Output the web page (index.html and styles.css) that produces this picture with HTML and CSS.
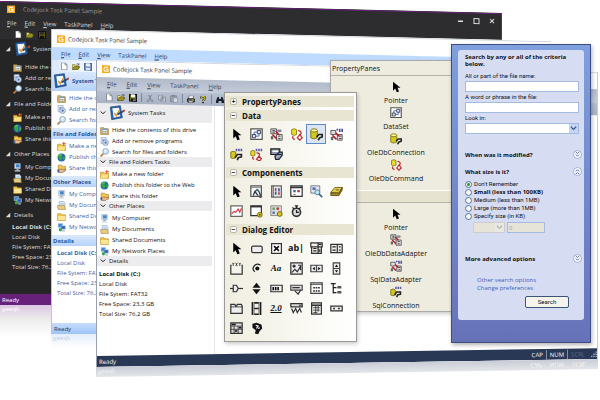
FILE: index.html
```html
<!DOCTYPE html>
<html lang="en">
<head>
  <meta charset="UTF-8">
  <meta name="viewport" content="width=device-width, initial-scale=1">
  <title>Codejock Task Panel Sample</title>
  <link rel="stylesheet" href="styles.css">
</head>
<body>

<!-- icon sprite -->
<svg class="sprite" aria-hidden="true">
  <symbol id="logo" viewBox="0 0 16 16"><path fill="#fba919" d="M0 0h16v16H0z"/><path d="M12 4H6L4 6v4l2 2h6V8H8" fill="none" stroke="#fff" stroke-width="2"/></symbol>
  <symbol id="new" viewBox="0 0 16 16"><path d="M3 1h7l4 4v10H3z" fill="#fff" stroke="#444"/><path d="M10 1v4h4" fill="none" stroke="#444"/></symbol>
  <symbol id="open" viewBox="0 0 16 16"><path d="M1 14V4h5l1 2h6v3" fill="#f3e37c" stroke="#5c5a10"/><path d="M1 14l3-6h12l-4 6z" fill="#9a9620" stroke="#3c3a08"/><path d="M9 3q3-3 5 1m0-3v3h-3" fill="none" stroke="#333"/></symbol>
  <symbol id="save" viewBox="0 0 16 16"><path d="M1 1h14v14H1z" fill="#6d6b12" stroke="#111" stroke-width="2"/><path d="M4 1h8v6H4z" fill="#fff"/><path d="M4 10h8v5H4z" fill="#111"/><path d="M9 11h2v3H9z" fill="#fff"/></symbol>
  <symbol id="save-dark" viewBox="0 0 16 16"><path d="M1 1h14v14H1z" fill="#55530f" stroke="#111" stroke-width="2"/><path d="M4 2h8v5H4z" fill="#2d2d30"/><path d="M4 10h8v5H4z" fill="#111"/></symbol>
  <symbol id="save-blue" viewBox="0 0 16 16"><path d="M1 1h14v14H1z" fill="#7c93bd" stroke="#526b9c" stroke-width="2"/><path d="M4 1h8v6H4z" fill="#e9f0fc"/><path d="M4 10h8v5H4z" fill="#dbe5f5"/></symbol>
  <symbol id="cut" viewBox="0 0 16 16"><path d="M5 1l5 10M11 1L6 11" stroke="#7d8594" stroke-width="2"/><circle cx="4" cy="13" r="2" fill="none" stroke="#7d8594" stroke-width="1.5"/><circle cx="12" cy="13" r="2" fill="none" stroke="#7d8594" stroke-width="1.5"/></symbol>
  <symbol id="copy" viewBox="0 0 16 16"><path d="M1 1h8v10H1zM6 5h9v10H6z" fill="#c6ccd8" stroke="#7d8594" stroke-width="1.5"/><path d="M8 8h5M8 11h5" stroke="#7d8594"/></symbol>
  <symbol id="paste" viewBox="0 0 16 16"><path d="M1 2h12v12H1z" fill="#9aa2b2" stroke="#7d8594" stroke-width="1.5"/><path d="M4 0h6v4H4z" fill="#7d8594"/><path d="M7 6h8v9H7z" fill="#d5dae3" stroke="#7d8594"/></symbol>
  <symbol id="print" viewBox="0 0 16 16"><path d="M4 1h9l-1 6H3z" fill="#fff" stroke="#222"/><path d="M1 7h14v6H1z" fill="#777" stroke="#111" stroke-width="1.5"/><path d="M3 11h9v4H3z" fill="#ddd" stroke="#111"/><path d="M10 9h3v1h-3z" fill="#ee0"/></symbol>
  <symbol id="help" viewBox="0 0 16 16"><path d="M4 6q0-4 4-4t4 3q0 2-4 5v1" fill="none" stroke="#222" stroke-width="4"/><path d="M4 6q0-4 4-4t4 3q0 2-4 5v1" fill="none" stroke="#eadb21" stroke-width="2"/><path d="M6 13h4v3H6z" fill="#333"/></symbol>
  <symbol id="find" viewBox="0 0 16 16"><path d="M3 2h3v4h4V2h3l3 8v4h-5v-4H5v4H0v-4z" fill="#18202e"/></symbol>
  <symbol id="tasks" viewBox="0 0 24 24"><path d="M2 3l15-2 3 18-16 3z" fill="#2d62a5" stroke="#194478"/><path d="M5 5l10-1 2 13-10 2z" fill="#f4f8fd"/><path d="M8 12l3 4 5-9" fill="none" stroke="#d9952c" stroke-width="2"/><path d="M13 14l9-5" stroke="#264c7d" stroke-width="3"/><path d="M21 9l3-1" stroke="#c2492e" stroke-width="3"/></symbol>
  <symbol id="hide" viewBox="0 0 16 16"><path d="M1 3h6l1 2h7v10H1z" fill="#e7bd58" stroke="#9a742b"/><path d="M4 5h9v8H4z" fill="#f5f5f5" stroke="#777"/><path d="M4 5h9v2H4z" fill="#739ec9"/><path d="M6 9h2v2H6zM9 9h2v2H9z" fill="#777"/></symbol>
  <symbol id="add" viewBox="0 0 16 16"><path d="M2 1h9v11H2z" fill="#e6eef8" stroke="#8494aa"/><path d="M4 4h5v4H4z" fill="#69a2d7"/><circle cx="10" cy="10" r="5" fill="#d5dff0" stroke="#5877ae"/><circle cx="10" cy="10" r="2" fill="#4d70b5"/></symbol>
  <symbol id="search" viewBox="0 0 16 16"><path d="M6 10l-5 5" stroke="#c37b43" stroke-width="3"/><circle cx="10" cy="6" r="5" fill="#d6ecfc" stroke="#7795b4" stroke-width="1.5"/><path d="M8 5l3-2" stroke="#fff" stroke-width="2"/></symbol>
  <symbol id="make" viewBox="0 0 16 16"><path d="M1 4h6l1 2h7v9H1z" fill="#efc445" stroke="#b58217"/><path d="M3 8h12l-2 7H1z" fill="#fbe184"/><path d="M12 0v7M9 3h7" stroke="#e35d36" stroke-width="2"/></symbol>
  <symbol id="globe" viewBox="0 0 16 16"><circle cx="8" cy="8" r="7" fill="#2863b7"/><path d="M2 4l5-3 3 2-2 3 2 3-3 5-3-3-2-4zM11 6l4 0-1 5-3 1z" fill="#31a83b"/><path d="M4 4l4-1" stroke="#b3e8ab"/></symbol>
  <symbol id="share" viewBox="0 0 16 16"><path d="M2 2h6l1 2h6v8H2z" fill="#f0c64f" stroke="#a77a1c"/><path d="M1 11l5-2 6 1 3-1v3l-5 3H4z" fill="#edbc8e" stroke="#835432"/><path d="M1 10h3v5H1z" fill="#335f9e"/></symbol>
  <symbol id="computer" viewBox="0 0 16 16"><path d="M3 1h10v9H3z" fill="#e7edf5" stroke="#8da0b8"/><path d="M5 2h7v6H5z" fill="#4285d1"/><path d="M6 10h4v3H6z" fill="#9ba9bb"/><path d="M3 13h10v2H3z" fill="#cad3df"/></symbol>
  <symbol id="docs" viewBox="0 0 16 16"><path d="M4 1h8l2 3v8H4z" fill="#f4f8ff" stroke="#6e8fb5"/><path d="M6 4h6M6 6h6" stroke="#78a4d8"/><path d="M1 8h12l2 7H2z" fill="#e9cc7d" stroke="#98804a"/></symbol>
  <symbol id="folder" viewBox="0 0 16 16"><path d="M1 3h6l1 2h7v10H1z" fill="#efc448" stroke="#b58c24"/><path d="M2 7h13v7H2z" fill="#fae596"/></symbol>
  <symbol id="network" viewBox="0 0 16 16"><path d="M2 1h8v7H2z" fill="#4285d1" stroke="#b8c8dc"/><path d="M7 5h8v6H7z" fill="#2c62b4" stroke="#cad7e6"/><circle cx="6" cy="12" r="3" fill="#39a758"/><path d="M9 13h5v2H9z" fill="#aab7c8"/></symbol>
  <symbol id="down" viewBox="0 0 8 8"><path d="M1 2l3 3 3-3" fill="none" stroke="currentColor" stroke-width="1.3"/></symbol>
  <symbol id="corner" viewBox="0 0 8 8"><path d="M7 1v6H1z" fill="currentColor"/></symbol>

  <!-- toolbox: data -->
  <symbol id="pointer" viewBox="0 0 16 16"><path d="M4 1v12l3-3 2 5 3-1-2-5h4z" fill="#000"/></symbol>
  <symbol id="dataset" viewBox="0 0 16 16"><path d="M1 1h14v13H1z" fill="#fff" stroke="#555" stroke-width="1.5"/><path d="M3 8h4v4H3zM9 3h4v4H9z" fill="#dce2ff" stroke="#223"/><path d="M7 10h4V7M5 8V5h4" fill="none" stroke="#234bb0"/></symbol>
  <symbol id="adapter" viewBox="0 0 16 16"><path d="M1 1h7v6H1zM8 8h7v7H8z" fill="#ddd" stroke="#444"/><path d="M3 3h3M3 5h3M10 10h3M10 13h3" stroke="#222"/><path d="M7 4l4 4M3 8l5 5" stroke="#b31f2b" stroke-width="2"/><path d="M9 2h5v3H9z" fill="#7c82a0"/><path d="M1 10h3v4H1z" fill="#666"/></symbol>
  <symbol id="sqladapter" viewBox="0 0 16 16"><path d="M1 3h6v5H1zM9 8h6v7H9z" fill="#ddd" stroke="#444"/><path d="M7 6l4 4M3 9l5 5" stroke="#b31f2b" stroke-width="2"/><path d="M8 1h2v2H8zM11 1h2v4h-2zM14 1h2v4h-2z" fill="#4949a4"/><path d="M11 10h3M11 13h3" stroke="#222"/><path d="M1 11h3v4H1z" fill="#666"/></symbol>
  <symbol id="command" viewBox="0 0 16 16"><path d="M2 2q3-2 6 0v6q-3 2-6 0z" fill="#eadb23" stroke="#7b7312"/><path d="M10 3q5 1 3 5M6 14q-4-1-2-4m5 2l3-4 3 4-3 3z" fill="none" stroke="#bb2730" stroke-width="1.5"/></symbol>
  <symbol id="sqlcommand" viewBox="0 0 16 16"><path d="M1 4q3-2 5 0v5q-2 2-5 0z" fill="#eadb23" stroke="#7b7312"/><path d="M7 1h2v3H7zM10 1h2v3h-2zM13 1h2v3h-2z" fill="#5959a4"/><path d="M8 6q5 0 3 4M5 14q-3-1-1-3m4 3l3-4 3 3-2 3z" fill="none" stroke="#bb2730" stroke-width="1.5"/></symbol>
  <symbol id="connection" viewBox="0 0 16 16"><path d="M1 3v9q4 3 8 0V3" fill="#d6c91c" stroke="#6c650c"/><ellipse cx="5" cy="3" rx="4" ry="2" fill="#fff48a" stroke="#6c650c"/><path d="M8 11l3-3h4v3l-3 1-2 3" fill="none" stroke="#222" stroke-width="2"/></symbol>
  <symbol id="sqlconnection" viewBox="0 0 16 16"><path d="M1 5v7q3 2 6 0V5q-3-2-6 0" fill="#d6c91c" stroke="#6c650c"/><path d="M7 1h2v3H7zM10 1h2v3h-2zM13 1h2v3h-2z" fill="#5959a4"/><path d="M6 12l3-4h5v3l-4 1-1 3" fill="none" stroke="#222" stroke-width="2"/></symbol>
  <symbol id="dataview" viewBox="0 0 16 16"><path d="M1 1h11v7H1z" fill="#8995a8" stroke="#222" stroke-width="1.5"/><path d="M3 3h7v2H3z" fill="#fff"/><path d="M6 8h8M12 5h3v4l-4 5H7l-1-4z" fill="#9aa7bd" stroke="#1d2430" stroke-width="1.5"/></symbol>
  <!-- toolbox: components -->
  <symbol id="form" viewBox="0 0 16 16"><path d="M1 1h13v13H1z" fill="#f6f6f6" stroke="#555" stroke-width="1.5"/><path d="M1 3h13" stroke="#777"/><path d="M4 13l2-5 3-2 2 2 2 5M6 8l4 5" fill="none" stroke="#26323e" stroke-width="1.5"/><circle cx="9" cy="6" r="1.5" fill="#3c7d70"/><circle cx="13" cy="14" r="2" fill="#555"/></symbol>
  <symbol id="report" viewBox="0 0 16 16"><path d="M2 1h12v14H2z" fill="#e6e6e6" stroke="#666" stroke-width="1.5"/><path d="M4 1v14" stroke="#444"/><path d="M7 8v4M11 4v4" stroke="#2f58a4" stroke-width="2"/><path d="M7 4v3M11 9v3" stroke="#b72d38" stroke-width="2"/></symbol>
  <symbol id="window" viewBox="0 0 16 16"><path d="M1 1h14v13H1z" fill="#fff" stroke="#333" stroke-width="1.5"/><path d="M1 3h14" stroke="#333" stroke-width="2"/><path d="M4 6h3v3H4z" fill="#3668a9"/><path d="M9 6h3v3H9zM4 11h3v1H4z" fill="#a33"/></symbol>
  <symbol id="inspect" viewBox="0 0 16 16"><path d="M1 1h11v9H1z" fill="#e4e7ed" stroke="#667"/><path d="M3 3h4v3H3z" fill="#456daf"/><circle cx="9" cy="9" r="3" fill="#bee4f5" stroke="#457592"/><path d="M11 11l4 4" stroke="#35658c" stroke-width="2"/></symbol>
  <symbol id="books" viewBox="0 0 16 16"><path d="M1 9l5-6h9l-4 7z" fill="#e2ca4e" stroke="#61500e"/><path d="M1 9v4h10l4-7V3l-4 7H1" fill="#a98b23" stroke="#51420b"/><path d="M7 6h4" stroke="#51420b"/></symbol>
  <symbol id="chart" viewBox="0 0 16 16"><path d="M1 1h14v13H1z" fill="#fff" stroke="#666" stroke-width="1.5"/><path d="M2 11l3-3 2 1 3-4 2 4 2-5" fill="none" stroke="#d1323c" stroke-width="1.3"/></symbol>
  <symbol id="gearform" viewBox="0 0 16 16"><path d="M1 1h13v12H1z" fill="#fff" stroke="#333" stroke-width="1.5"/><path d="M1 2h13" stroke="#333" stroke-width="2"/><circle cx="12" cy="12" r="3" fill="#d5c51c" stroke="#655b0c"/><circle cx="12" cy="12" r="1" fill="#222"/></symbol>
  <symbol id="schedule" viewBox="0 0 16 16"><path d="M1 1h13v12H1z" fill="#ddd" stroke="#777"/><path d="M3 3h3v3H3z" fill="#5a6"/><path d="M8 3h3v3H8z" fill="#b33"/><path d="M3 8h3v3H3z" fill="#57a"/><circle cx="12" cy="11" r="3" fill="#d5c51c" stroke="#655b0c"/></symbol>
  <symbol id="timer" viewBox="0 0 16 16"><circle cx="8" cy="9" r="5" fill="#ddd" stroke="#333" stroke-width="2"/><path d="M6 1h4M8 1v3M3 3l2 2M13 3l-2 2M8 6v3h3" fill="none" stroke="#222" stroke-width="1.5"/></symbol>
  <!-- toolbox: dialog editor -->
  <symbol id="dbutton" viewBox="0 0 16 16"><rect x="2" y="5" width="13" height="8" rx="2" fill="#eee" stroke="#333" stroke-width="1.5"/></symbol>
  <symbol id="dcheck" viewBox="0 0 16 16"><path d="M2 2h12v12H2z" fill="#fff" stroke="#333" stroke-width="1.5"/><path d="M5 5l6 6m0-6l-6 6" stroke="#111" stroke-width="2"/></symbol>
  <symbol id="dcombo" viewBox="0 0 16 16"><path d="M1 1h14v5H1zM2 6h12v8H2z" fill="#eee" stroke="#333" stroke-width="1.5"/><path d="M10 1v13M4 8h4M4 11h4M11 3h3M12 9v3" stroke="#222" stroke-width="1.5"/></symbol>
  <symbol id="dlist" viewBox="0 0 16 16"><path d="M1 3h14v10H1zM9 3v10" fill="#eee" stroke="#333" stroke-width="1.5"/><path d="M3 6h4M3 10h4M11 6h2M11 10h2" stroke="#222" stroke-width="1.5"/></symbol>
  <symbol id="dgroup" viewBox="0 0 16 16"><path d="M2 4H1v11h14V4h-1" fill="#f5f4ec" stroke="#333" stroke-width="1.5"/><path d="M3 1l1 2 1-2M4 3v2M7 1l2 4M9 1L7 5M11 1l1 2 1-2M12 3v2" fill="none" stroke="#333"/></symbol>
  <symbol id="dradio" viewBox="0 0 16 16"><path d="M13 4Q8 1 5 5t1 7" fill="none" stroke="#222" stroke-width="1.5"/><circle cx="9" cy="8" r="2.5" fill="#111"/></symbol>
  <symbol id="dpicture" viewBox="0 0 16 16"><path d="M1 1h14v14H1z" fill="#eee" stroke="#333" stroke-width="1.5"/><circle cx="5" cy="5" r="2" fill="#333"/><path d="M2 13l4-4 3 3 4-7M10 4h3v6" fill="none" stroke="#333" stroke-width="1.5"/></symbol>
  <symbol id="dhscroll" viewBox="0 0 16 16"><path d="M1 4h14v8H1zM8 4v8" fill="#eee" stroke="#444" stroke-width="1.5"/><path d="M6 6v4L3 8zM10 6v4l3-2z" fill="#111"/></symbol>
  <symbol id="dvscroll" viewBox="0 0 16 16"><path d="M4 1h8v14H4zM4 8h8" fill="#eee" stroke="#444" stroke-width="1.5"/><path d="M6 6h4L8 3zM6 10h4l-2 3z" fill="#111"/></symbol>
  <symbol id="dslider" viewBox="0 0 16 16"><path d="M0 8h16" stroke="#333" stroke-width="1.5"/><path d="M4 4h4l2 4-2 4H4z" fill="#eee" stroke="#333" stroke-width="1.5"/></symbol>
  <symbol id="dspin" viewBox="0 0 16 16"><path d="M3 7l5-6 5 6zM3 9h10l-5 6z" fill="#111"/></symbol>
  <symbol id="dprogress" viewBox="0 0 16 16"><path d="M1 4h14v8H1z" fill="#eee" stroke="#333" stroke-width="1.5"/><path d="M3 6h2v4H3zM6 6h2v4H6zM9 6h2v4H9z" fill="#111"/></symbol>
  <symbol id="dhotkey" viewBox="0 0 16 16"><path d="M1 4h14v6H1z" fill="#ddd" stroke="#444" stroke-width="1.5"/><path d="M3 7h9M6 11l4 4 3-5" fill="none" stroke="#333" stroke-width="1.5"/></symbol>
  <symbol id="dgrid" viewBox="0 0 16 16"><path d="M1 1h14v13H1z" fill="#fff" stroke="#444" stroke-width="1.5"/><path d="M1 3h14" stroke="#444"/><path d="M4 7h2m1 0h2m1 0h2M4 11h2m1 0h2m1 0h2" stroke="#222" stroke-width="2"/></symbol>
  <symbol id="dtree" viewBox="0 0 16 16"><path d="M1 2h6M4 2v12M4 7h4M4 13h4" fill="none" stroke="#222" stroke-width="1.5"/><path d="M9 5h5v3H9zM9 11h5v3H9z" fill="#555"/></symbol>
  <symbol id="dtab" viewBox="0 0 16 16"><path d="M1 14V3h5l1 2h1l1-2h5l1 2v9z" fill="#eee" stroke="#333" stroke-width="1.5"/><path d="M1 6h14" stroke="#333"/></symbol>
  <symbol id="dfilm" viewBox="0 0 16 16"><path d="M3 0v16M13 0v16M5 1h6M5 8h6M5 15h6" stroke="#222" stroke-width="2"/><path d="M5 0v16M11 0v16" stroke="#555"/></symbol>
  <symbol id="drich" viewBox="0 0 16 16"><path d="M1 2h14v4H1z" fill="#ddd" stroke="#333" stroke-width="1.5"/><path d="M2 8l2 5 3-5 2 5 3-5 2 5M11 4h3" fill="none" stroke="#333" stroke-width="1.5"/></symbol>
  <symbol id="dcalendar" viewBox="0 0 16 16"><path d="M2 1h12v14H2z" fill="#eee" stroke="#333" stroke-width="1.5"/><path d="M2 4h12" stroke="#333" stroke-width="2"/><path d="M4 7h8M4 10h8M4 13h5M7 5v9M10 5v7" stroke="#333"/></symbol>
  <symbol id="dip" viewBox="0 0 16 16"><path d="M1 5h14v6H1z" fill="#eee" stroke="#333" stroke-width="1.5"/><path d="M4 8h2M10 8h2" stroke="#111" stroke-width="2"/></symbol>
  <symbol id="dbox" viewBox="0 0 16 16"><path d="M1 1h14v13H1z" fill="#ddd" stroke="#333" stroke-width="1.5"/><path d="M1 5h14M5 5v9M10 5v9M1 9h14" stroke="#333"/><path d="M2 3h5M6 11h3M11 7h3" stroke="#111" stroke-width="2"/></symbol>
  <symbol id="dcustom" viewBox="0 0 16 16"><path d="M3 2l5-1 6 2 1 5-3 3-2 4-4-1 1-4-4-3z" fill="#111"/><path d="M7 4l3 1-2 3M10 8l2-1" fill="none" stroke="#fff" stroke-width="1.5"/></symbol>
</svg>

<main class="desktop">

  <!-- Visual Studio dark theme -->
  <section class="window dark">
    <header class="window-head">
      <div class="title-bar">
        <svg class="logo"><use href="#logo"/></svg>
        <span>Codejock Task Panel Sample</span>
        <div class="caption-buttons">
          <button type="button" aria-label="Minimize"><svg viewBox="0 0 8 8"><path d="M2 5h5" stroke="#ddd" stroke-width="1.5"/></svg></button>
          <button type="button" aria-label="Maximize"><svg viewBox="0 0 8 8"><path d="M2 2h5v5H2z" fill="none" stroke="#ddd"/></svg></button>
          <button type="button" aria-label="Close"><svg viewBox="0 0 8 8"><path d="M2 2l4 4m0-4L2 6" stroke="#ddd"/></svg></button>
        </div>
      </div>
      <nav class="menu">
        <button type="button"><u>F</u>ile</button>
        <button type="button"><u>E</u>dit</button>
        <button type="button"><u>V</u>iew</button>
        <button type="button">TaskPanel</button>
        <button type="button"><u>H</u>elp</button>
      </nav>
      <div class="toolbar">
        <button type="button" aria-label="New"><svg><use href="#new"/></svg></button>
        <button type="button" aria-label="Open"><svg><use href="#open"/></svg></button>
        <button type="button" aria-label="Save"><svg><use href="#save-dark"/></svg></button>
      </div>
    </header>
    <div class="tasks">
      <h2 class="special"><svg class="mark"><use href="#corner"/></svg><svg class="big"><use href="#tasks"/></svg>System Tasks</h2>
      <ul>
        <li><a href="#"><svg><use href="#hide"/></svg>Hide the contents of this drive</a></li>
        <li><a href="#"><svg><use href="#add"/></svg>Add or remove programs</a></li>
        <li><a href="#"><svg><use href="#search"/></svg>Search for files and folders</a></li>
      </ul>
      <h2><svg class="mark"><use href="#corner"/></svg>File and Folders Tasks</h2>
      <ul>
        <li><a href="#"><svg><use href="#make"/></svg>Make a new folder</a></li>
        <li><a href="#"><svg><use href="#globe"/></svg>Publish this folder to the Web</a></li>
        <li><a href="#"><svg><use href="#share"/></svg>Share this folder</a></li>
      </ul>
      <h2><svg class="mark"><use href="#corner"/></svg>Other Places</h2>
      <ul>
        <li><a href="#"><svg><use href="#computer"/></svg>My Computer</a></li>
        <li><a href="#"><svg><use href="#docs"/></svg>My Documents</a></li>
        <li><a href="#"><svg><use href="#folder"/></svg>Shared Documents</a></li>
        <li><a href="#"><svg><use href="#network"/></svg>My Network Places</a></li>
      </ul>
      <h2><svg class="mark"><use href="#corner"/></svg>Details</h2>
      <div class="details">
        <strong>Local Disk (C:)</strong>
        <span>Local Disk</span>
        <span>File Sytem: FAT32</span>
        <span>Free Space: 23,3 GB</span>
        <span>Total Size: 76,2 GB</span>
      </div>
    </div>
    <footer class="status">Ready</footer>
  </section>
  <div class="reflection dark-reflection" aria-hidden="true"><span>Ready</span></div>

  <!-- Office 2007 blue theme -->
  <section class="window blue">
    <header class="window-head">
      <div class="title-bar">
        <svg class="logo"><use href="#logo"/></svg>
        <span>Codejock Task Panel Sample</span>
      </div>
      <nav class="menu">
        <button type="button"><u>F</u>ile</button>
        <button type="button"><u>E</u>dit</button>
        <button type="button"><u>V</u>iew</button>
        <button type="button">TaskPanel</button>
        <button type="button"><u>H</u>elp</button>
      </nav>
      <div class="toolbar">
        <button type="button" aria-label="New"><svg><use href="#new"/></svg></button>
        <button type="button" aria-label="Open"><svg><use href="#open"/></svg></button>
        <button type="button" aria-label="Save"><svg><use href="#save-blue"/></svg></button>
      </div>
    </header>
    <div class="tasks">
      <h2 class="special"><svg class="big"><use href="#tasks"/></svg>System Tasks</h2>
      <ul>
        <li><a href="#"><svg><use href="#hide"/></svg>Hide the contents of this drive</a></li>
        <li><a href="#"><svg><use href="#add"/></svg>Add or remove programs</a></li>
        <li><a href="#"><svg><use href="#search"/></svg>Search for files and folders</a></li>
      </ul>
      <h2>File and Folders Tasks</h2>
      <ul>
        <li><a href="#"><svg><use href="#make"/></svg>Make a new folder</a></li>
        <li><a href="#"><svg><use href="#globe"/></svg>Publish this folder to the Web</a></li>
        <li><a href="#"><svg><use href="#share"/></svg>Share this folder</a></li>
      </ul>
      <h2>Other Places</h2>
      <ul>
        <li><a href="#"><svg><use href="#computer"/></svg>My Computer</a></li>
        <li><a href="#"><svg><use href="#docs"/></svg>My Documents</a></li>
        <li><a href="#"><svg><use href="#folder"/></svg>Shared Documents</a></li>
        <li><a href="#"><svg><use href="#network"/></svg>My Network Places</a></li>
      </ul>
      <h2>Details</h2>
      <div class="details">
        <strong>Local Disk (C:)</strong>
        <span>Local Disk</span>
        <span>File Sytem: FAT32</span>
        <span>Free Space: 23,3 GB</span>
        <span>Total Size: 76,2 GB</span>
      </div>
    </div>
    <footer class="status">Ready</footer>
  </section>
  <div class="reflection blue-reflection" aria-hidden="true"><span>Ready</span></div>

  <!-- Visual Studio 2010 theme -->
  <section class="window light">
    <header class="window-head">
      <div class="title-bar">
        <svg class="logo"><use href="#logo"/></svg>
        <span>Codejock Task Panel Sample</span>
      </div>
      <nav class="menu">
        <button type="button"><u>F</u>ile</button>
        <button type="button"><u>E</u>dit</button>
        <button type="button"><u>V</u>iew</button>
        <button type="button">TaskPanel</button>
        <button type="button"><u>H</u>elp</button>
      </nav>
      <div class="toolbar">
        <button type="button" aria-label="New"><svg><use href="#new"/></svg></button>
        <button type="button" aria-label="Open"><svg><use href="#open"/></svg></button>
        <button type="button" aria-label="Save"><svg><use href="#save"/></svg></button>
        <i class="separator"></i>
        <button type="button" aria-label="Cut"><svg><use href="#cut"/></svg></button>
        <button type="button" aria-label="Copy"><svg><use href="#copy"/></svg></button>
        <button type="button" aria-label="Paste"><svg><use href="#paste"/></svg></button>
        <i class="separator"></i>
        <button type="button" aria-label="Print"><svg><use href="#print"/></svg></button>
        <button type="button" aria-label="About"><svg><use href="#help"/></svg></button>
        <i class="separator"></i>
        <button type="button" class="find"><svg><use href="#find"/></svg>Se</button>
      </div>
    </header>
    <div class="tasks">
      <h2 class="special"><svg class="mark"><use href="#down"/></svg><svg class="big"><use href="#tasks"/></svg>System Tasks</h2>
      <ul>
        <li><a href="#"><svg><use href="#hide"/></svg>Hide the contents of this drive</a></li>
        <li><a href="#"><svg><use href="#add"/></svg>Add or remove programs</a></li>
        <li><a href="#"><svg><use href="#search"/></svg>Search for files and folders</a></li>
      </ul>
      <h2><svg class="mark"><use href="#down"/></svg>File and Folders Tasks</h2>
      <ul>
        <li><a href="#"><svg><use href="#make"/></svg>Make a new folder</a></li>
        <li><a href="#"><svg><use href="#globe"/></svg>Publish this folder to the Web</a></li>
        <li><a href="#"><svg><use href="#share"/></svg>Share this folder</a></li>
      </ul>
      <h2><svg class="mark"><use href="#down"/></svg>Other Places</h2>
      <ul>
        <li><a href="#"><svg><use href="#computer"/></svg>My Computer</a></li>
        <li><a href="#"><svg><use href="#docs"/></svg>My Documents</a></li>
        <li><a href="#"><svg><use href="#folder"/></svg>Shared Documents</a></li>
        <li><a href="#"><svg><use href="#network"/></svg>My Network Places</a></li>
      </ul>
      <h2><svg class="mark"><use href="#down"/></svg>Details</h2>
      <div class="details">
        <strong>Local Disk (C:)</strong>
        <span>Local Disk</span>
        <span>File Sytem: FAT32</span>
        <span>Free Space: 23,3 GB</span>
        <span>Total Size: 76,2 GB</span>
      </div>
    </div>
    <footer class="status">
      <span class="message">Ready</span>
      <span>CAP</span><span>NUM</span><span class="off">SCRL</span>
      <svg class="grip" viewBox="0 0 8 8"><path d="M6 0h2v2H6zM3 3h2v2H3zM6 3h2v2H6zM0 6h2v2H0zM3 6h2v2H3zM6 6h2v2H6z" fill="#9aa6bd"/></svg>
    </footer>
  </section>
  <div class="reflection light-reflection" aria-hidden="true"><span class="message">Ready</span><span>CAP</span><span>NUM</span><span>SCRL</span></div>

  <section class="property-panes">
    <h2>PropertyPanes</h2>
    <ul>
      <li><svg><use href="#pointer"/></svg>Pointer</li>
      <li><svg><use href="#dataset"/></svg>DataSet</li>
      <li><svg><use href="#connection"/></svg>OleDbConnection</li>
      <li><svg><use href="#command"/></svg>OleDbCommand</li>
    </ul>
    <h2 class="blank"></h2>
    <ul>
      <li><svg><use href="#pointer"/></svg>Pointer</li>
      <li><svg><use href="#adapter"/></svg>OleDbDataAdapter</li>
      <li><svg><use href="#sqladapter"/></svg>SqlDataAdapter</li>
      <li><svg><use href="#sqlconnection"/></svg>SqlConnection</li>
    </ul>
  </section>

  <section class="toolbox">
    <h2><span class="expander">+</span>PropertyPanes</h2>
    <h2><span class="expander">−</span>Data</h2>
    <div class="tools">
      <button type="button" aria-label="Pointer"><svg><use href="#pointer"/></svg></button>
      <button type="button" aria-label="DataSet"><svg><use href="#dataset"/></svg></button>
      <button type="button" aria-label="OleDbDataAdapter"><svg><use href="#adapter"/></svg></button>
      <button type="button" aria-label="OleDbCommand"><svg><use href="#command"/></svg></button>
      <button type="button" aria-label="OleDbConnection" class="selected"><svg><use href="#connection"/></svg></button>
      <button type="button" aria-label="SqlDataAdapter"><svg><use href="#sqladapter"/></svg></button>
      <button type="button" aria-label="SqlConnection"><svg><use href="#sqlconnection"/></svg></button>
      <button type="button" aria-label="SqlCommand"><svg><use href="#sqlcommand"/></svg></button>
      <button type="button" aria-label="DataView"><svg><use href="#dataview"/></svg></button>
    </div>
    <h2><span class="expander">−</span>Componenents</h2>
    <div class="tools">
      <button type="button" aria-label="Pointer"><svg><use href="#pointer"/></svg></button>
      <button type="button" aria-label="Form"><svg><use href="#form"/></svg></button>
      <button type="button" aria-label="Report"><svg><use href="#report"/></svg></button>
      <button type="button" aria-label="Window"><svg><use href="#window"/></svg></button>
      <button type="button" aria-label="Directory searcher"><svg><use href="#inspect"/></svg></button>
      <button type="button" aria-label="Message queue"><svg><use href="#books"/></svg></button>
      <button type="button" aria-label="Performance counter"><svg><use href="#chart"/></svg></button>
      <button type="button" aria-label="Process"><svg><use href="#gearform"/></svg></button>
      <button type="button" aria-label="Service controller"><svg><use href="#schedule"/></svg></button>
      <button type="button" aria-label="Timer"><svg><use href="#timer"/></svg></button>
    </div>
    <h2><span class="expander">−</span>Dialog Editor</h2>
    <div class="tools">
      <button type="button" aria-label="Pointer"><svg><use href="#pointer"/></svg></button>
      <button type="button" aria-label="Button"><svg><use href="#dbutton"/></svg></button>
      <button type="button" aria-label="Check box"><svg><use href="#dcheck"/></svg></button>
      <button type="button" class="glyph">ab|</button>
      <button type="button" aria-label="Combo box"><svg><use href="#dcombo"/></svg></button>
      <button type="button" aria-label="List box"><svg><use href="#dlist"/></svg></button>
      <button type="button" aria-label="Group box"><svg><use href="#dgroup"/></svg></button>
      <button type="button" aria-label="Radio button"><svg><use href="#dradio"/></svg></button>
      <button type="button" class="glyph serif">Aa</button>
      <button type="button" aria-label="Picture"><svg><use href="#dpicture"/></svg></button>
      <button type="button" aria-label="Horizontal scroll bar"><svg><use href="#dhscroll"/></svg></button>
      <button type="button" aria-label="Vertical scroll bar"><svg><use href="#dvscroll"/></svg></button>
      <button type="button" aria-label="Slider"><svg><use href="#dslider"/></svg></button>
      <button type="button" aria-label="Spin"><svg><use href="#dspin"/></svg></button>
      <button type="button" aria-label="Progress"><svg><use href="#dprogress"/></svg></button>
      <button type="button" aria-label="Hot key"><svg><use href="#dhotkey"/></svg></button>
      <button type="button" aria-label="List control"><svg><use href="#dgrid"/></svg></button>
      <button type="button" aria-label="Tree control"><svg><use href="#dtree"/></svg></button>
      <button type="button" aria-label="Tab control"><svg><use href="#dtab"/></svg></button>
      <button type="button" aria-label="Animation"><svg><use href="#dfilm"/></svg></button>
      <button type="button" class="glyph serif"><u>2.0</u></button>
      <button type="button" aria-label="Date picker"><svg><use href="#drich"/></svg></button>
      <button type="button" aria-label="Calendar"><svg><use href="#dcalendar"/></svg></button>
      <button type="button" aria-label="IP address"><svg><use href="#dip"/></svg></button>
      <button type="button" aria-label="Extended combo"><svg><use href="#dbox"/></svg></button>
      <button type="button" aria-label="Custom control"><svg><use href="#dcustom"/></svg></button>
    </div>
  </section>

  <section class="search-panel">
    <form class="search-card">
      <h2>Search by any or all of the criteria below.</h2>
      <label for="name">All or part of the file name:</label>
      <input type="text" id="name">
      <label for="phrase">A word or phrase in the file:</label>
      <input type="text" id="phrase">
      <label for="place">Look in:</label>
      <div class="select">
        <select id="place"><option></option></select>
        <svg><use href="#down"/></svg>
      </div>

      <h3 class="first">When was it modified? <button type="button" class="round" aria-label="Expand"><svg viewBox="0 0 8 8"><path d="M2 1l2 2 2-2M2 4l2 2 2-2"/></svg></button></h3>
      <h3>What size is it? <button type="button" class="round" aria-label="Collapse"><svg viewBox="0 0 8 8"><path d="M2 4l2-2 2 2M2 7l2-2 2 2"/></svg></button></h3>
      <div class="sizes">
        <label><input type="radio" name="size" checked> Don't Remember</label>
        <label class="strong"><input type="radio" name="size"> Small (less than 100KB)</label>
        <label><input type="radio" name="size"> Medium (less than 1MB)</label>
        <label><input type="radio" name="size"> Large (more than 1MB)</label>
        <label><input type="radio" name="size"> Specify size (in KB)</label>
      </div>
      <div class="specify">
        <div class="select">
          <select disabled aria-label="Comparison"><option></option></select>
          <svg><use href="#down"/></svg>
        </div>
        <input type="text" value="0" disabled aria-label="Size in KB">
      </div>
      <h3 class="more">More advanced options <button type="button" class="round" aria-label="Expand"><svg viewBox="0 0 8 8"><path d="M2 1l2 2 2-2M2 4l2 2 2-2"/></svg></button></h3>
      <div class="links">
        <a href="#">Other search options</a>
        <a href="#">Change preferences</a>
      </div>
      <button type="button" class="search-button">Search</button>
    </form>
  </section>
</main>

</body>
</html>
```
FILE: styles.css
```css
* {
  box-sizing: border-box;
}

body {
  margin: 0;
  background: #fff;
  font-family: "Open Sans", "Noto Sans", sans-serif;
  font-size: 6px;
  line-height: 10px;
  color: #111;
}

h2, h3, ul {
  margin: 0;
  padding: 0;
  font-size: inherit;
  font-weight: normal;
  list-style: none;
}

button, input, select {
  margin: 0;
  padding: 0;
  border: none;
  background: none;
  font: inherit;
  color: inherit;
}

a {
  color: inherit;
  text-decoration: none;
}

.sprite {
  position: absolute;
  width: 0;
  height: 0;
}

.desktop {
  position: relative;
  min-height: 400px;
  overflow: hidden;
}

/* sample windows, seen at a slight angle */
.window {
  position: absolute;
  display: flex;
  flex-direction: column;
  clip-path: polygon(0 0, 100% 12px, 100% 100%, 0 100%);
}

.window-head {
  position: relative;
  z-index: 1;
  transform: skewY(1.4deg);
  transform-origin: top left;
}

.title-bar {
  display: flex;
  align-items: center;
  height: 16px;
  padding-left: 5px;
  gap: 3px;
}

.logo {
  width: 8px;
  height: 8px;
}

.caption-buttons {
  display: flex;
  gap: 8px;
  margin-left: auto;
  padding-right: 5px;
}

.caption-buttons svg {
  display: block;
  width: 8px;
  height: 8px;
}

.menu {
  display: flex;
  align-items: center;
  gap: 8px;
  height: 13px;
  padding-left: 9px;
}

.toolbar {
  display: flex;
  align-items: center;
  gap: 4px;
  height: 13px;
  padding-left: 8px;
}

.toolbar button {
  display: flex;
  align-items: center;
}

.toolbar svg {
  width: 8px;
  height: 8px;
}

.separator {
  width: 1px;
  height: 9px;
  background: #7f8aa0;
}

.tasks {
  flex: 1;
  overflow: hidden;
}

.tasks h2 {
  display: flex;
  align-items: center;
  gap: 3px;
  height: 11px;
  padding-left: 3px;
  white-space: nowrap;
}

.tasks .special {
  height: 20px;
}

.mark {
  flex: none;
  width: 6px;
  height: 6px;
}

.big {
  flex: none;
  width: 16px;
  height: 16px;
}

.tasks ul {
  display: flex;
  flex-direction: column;
  gap: 1px;
  padding: 2px 0 3px 5px;
}

.tasks li a {
  display: flex;
  align-items: center;
  gap: 3px;
  height: 10px;
  white-space: nowrap;
}

.tasks li svg {
  flex: none;
  width: 9px;
  height: 9px;
}

.details {
  display: flex;
  flex-direction: column;
  padding: 3px 0 0 5px;
  white-space: nowrap;
}

.status {
  display: flex;
  align-items: center;
  height: 11px;
  padding-left: 2px;
}

/* dark */
.dark {
  top: 1px;
  left: 0;
  right: 98px;
  height: 304px;
  background: #252526;
  color: #dcdcdc;
}

.dark .window-head {
  background: #2d2d30;
  border-top: 1px solid #68217a;
  border-right: 1px solid #68217a;
}

.dark .title-bar {
  height: 14px;
  padding-left: 7px;
  gap: 8px;
  color: #999;
}

.dark .menu {
  padding-left: 7px;
}

.dark .toolbar {
  height: 10px;
  padding-left: 14px;
}

.dark .tasks {
  width: 51px;
  padding-left: 2px;
}

.dark .tasks ul {
  padding: 3px 0 4px 11px;
}

.dark .details {
  padding: 2px 0 0 10px;
}

.dark .status {
  margin-right: -1px;
  background: #68217a;
  color: #fff;
}

/* blue */
.blue {
  top: 29px;
  left: 51px;
  right: 49px;
  height: 305px;
  background: #fff;
  border-left: 1px solid #b9c7dd;
  color: #3d62a2;
}

.blue .title-bar {
  height: 17px;
  color: #333;
}

.blue .window-head {
  background: #fff;
  border-top: 1px solid #d5d8de;
}

.blue .menu {
  background: #bfdbff;
  color: #23395d;
}

.blue .toolbar {
  height: 11px;
  background: linear-gradient(90deg, #dce9fb, #fff 60px);
}

.blue .tasks {
  width: 45px;
}

.blue .tasks h2 {
  padding-left: 1px;
  background: linear-gradient(#dbe9fd, #b6d3fa);
  font-weight: bold;
  color: #2a5298;
}

.blue .details {
  padding-top: 2px;
}

.blue .status {
  background: linear-gradient(#c6ddfd, #9fc4f6);
  color: #23395d;
}

/* light */
.light {
  top: 60px;
  left: 96px;
  right: 2px;
  height: 307px;
  background: #fff;
  border-left: 1px solid #9aa0ac;
  border-right: 1px solid #ccc;
  clip-path: polygon(0 0, 100% 12px, 100% calc(100% - 8px), 0 100%);
}

.light .window-head {
  background: #fff;
  border-top: 1px solid #d5d8de;
}

.light .title-bar {
  color: #333;
}

.light .menu {
  gap: 10px;
  padding-left: 10px;
  background: linear-gradient(#b2bbcb, #c5ccd9);
  color: #333f55;
}

.light .toolbar {
  background: linear-gradient(#b8c1d1, #aab3c6);
}

.light .find {
  gap: 2px;
}

.light .tasks {
  width: 118px;
  border-right: 1px solid #e4e4ea;
  color: #111;
}

.light .tasks h2 {
  height: 10px;
  margin-right: 2px;
  background: #ececee;
}

.light .tasks .special {
  height: 20px;
}

.light .tasks ul {
  padding: 2px 0 0 3px;
}

.light .details {
  padding-left: 2px;
}

.light .status {
  transform: skewY(-0.9deg);
  transform-origin: bottom left;
  gap: 3px;
  background: #293955;
  color: #fff;
}

.message {
  margin-right: auto;
}

.light .status span + span {
  padding-right: 3px;
  border-right: 1px solid #8490a8;
}

.light .status .off {
  border: none;
  color: #5b6982;
}

.grip {
  width: 6px;
  height: 6px;
}

/* mirror images under the windows */
.reflection {
  position: absolute;
  display: flex;
  gap: 8px;
  padding: 0 12px 0 2px;
}

.reflection span {
  transform: scaleY(-1);
}

.dark-reflection {
  top: 305px;
  left: 0;
  width: 51px;
  height: 32px;
  align-items: flex-start;
  background: linear-gradient(#dcc6e2, #ececec 14px, #fff);
  color: #fff;
}

.blue-reflection {
  top: 334px;
  left: 51px;
  width: 46px;
  height: 30px;
  align-items: flex-start;
  background: linear-gradient(#e4eefc, #fff 14px);
  color: #c5cede;
}

.light-reflection {
  top: 367px;
  left: 96px;
  right: 2px;
  height: 10px;
  background: linear-gradient(#c8ccd5, #e3e5e9);
  color: #f4f4f6;
  transform: skewY(-0.9deg);
  transform-origin: top left;
}

/* property panes */
.property-panes {
  position: absolute;
  top: 60px;
  left: 330px;
  width: 126px;
  height: 252px;
  overflow: hidden;
  background: #eeecdf;
  border: 1px solid #aaa;
  box-shadow: 1px 2px 4px rgba(0,0,0,0.2);
  font-size: 7px;
  color: #111;
}

.property-panes h2 {
  height: 15px;
  padding-left: 1px;
  border-bottom: 1px solid #b5b3a8;
  line-height: 15px;
}

.property-panes .blank {
  height: 13px;
  border-top: 1px solid #fff;
  background: #e6e3d1;
}

.property-panes ul {
  padding: 5px 0 5px 6px;
}

.property-panes li {
  display: flex;
  flex-direction: column;
  align-items: center;
  height: 26px;
}

.property-panes svg {
  width: 12px;
  height: 12px;
}

.property-panes li {
  gap: 3px;
}

/* toolbox */
.toolbox {
  position: absolute;
  top: 92px;
  left: 224px;
  width: 133px;
  padding: 3px 2px 0 1px;
  background: linear-gradient(90deg, #f0eee0, #fff);
  border: 1px solid #999;
  box-shadow: 1px 2px 4px rgba(0,0,0,0.2);
}

.toolbox h2 {
  display: flex;
  align-items: center;
  gap: 5px;
  height: 11px;
  margin-bottom: 3px;
  padding-left: 4px;
  background: #e9e5d3;
  font-size: 8px;
  font-weight: bold;
}

.expander {
  width: 7px;
  height: 7px;
  border: 1px solid #b9b7a9;
  border-radius: 2px;
  background: #fff;
  font-size: 7px;
  line-height: 5px;
  text-align: center;
}

.tools {
  display: grid;
  grid-template-columns: repeat(6, 20px);
  grid-auto-rows: 20px;
  padding-bottom: 3px;
}

.tools button {
  display: flex;
  align-items: center;
  justify-content: center;
}

.tools svg {
  width: 13px;
  height: 13px;
}

.tools .selected {
  border: 1px solid #5f89c4;
  background: #dbe5f3;
}

.glyph {
  font-size: 9px;
  font-weight: bold;
}

.tools .serif {
  font-family: "Liberation Serif", serif;
  font-style: italic;
}

/* search panel */
.search-panel {
  position: absolute;
  top: 44px;
  right: 9px;
  width: 140px;
  height: 299px;
  padding: 5px 6px;
  background: linear-gradient(#7ea0dc, #6672b8);
  border: 1px solid #3f4d84;
  box-shadow: 1px 2px 4px rgba(0,0,0,0.3);
}

.search-card {
  display: flex;
  flex-direction: column;
  height: 270px;
  padding: 4px 5px 0 7px;
  background: #d6dcf2;
  border-radius: 3px;
  font-family: Roboto, "Liberation Sans", sans-serif;
  line-height: 8px;
}

.search-card h2 {
  height: 18px;
  font-family: "Open Sans", sans-serif;
  font-weight: bold;
  line-height: 7px;
}

.search-card > label {
  margin-bottom: 1px;
}

.search-card > input,
.search-card > .select {
  height: 11px;
  margin-bottom: 1px;
  background: #fff;
  border: 1px solid #a3bbdf;
}

.select {
  position: relative;
  display: flex;
}

.select select {
  width: 100%;
  appearance: none;
}

.select svg {
  position: absolute;
  top: 0;
  right: 0;
  width: 9px;
  height: 9px;
  padding: 1px;
  background: #c6d4f3;
  color: #3c5585;
  pointer-events: none;
}

.search-card h3 {
  display: flex;
  align-items: center;
  justify-content: space-between;
  height: 17px;
  margin-right: -3px;
  font-family: "Open Sans", sans-serif;
  font-weight: bold;
}

.search-card .first {
  margin-top: 11px;
}

.round {
  width: 9px;
  height: 9px;
  border: 1px solid #9fb0d8;
  border-radius: 50%;
  background: #fff;
}

.round svg {
  display: block;
  width: 7px;
  height: 7px;
  fill: none;
  stroke: #3a5596;
}

.sizes label {
  display: flex;
  align-items: center;
  gap: 2px;
  height: 8px;
}

.sizes .strong {
  font-family: "Open Sans", sans-serif;
  font-weight: bold;
}

.sizes input {
  width: 7px;
  height: 7px;
  appearance: none;
  border: 1px solid #58779f;
  border-radius: 50%;
  background: #f6f6f2;
}

.sizes input:checked {
  background: radial-gradient(#2aa52a 1px, #f6f6f2 2px);
}

.specify {
  display: flex;
  gap: 2px;
  margin: 2px 0 0 8px;
}

.specify .select,
.specify > input {
  height: 11px;
  border: 1px solid #cbcdd0;
  background: #e6e4d8;
}

.specify .select {
  width: 32px;
}

.specify > input {
  width: 38px;
  padding-left: 1px;
  border-color: #a3bbdf;
  color: #aaa;
}

.specify svg {
  background: #e9e8e2;
  color: #b5b5b0;
}

.search-card .more {
  margin-top: 17px;
}

.links {
  display: flex;
  flex-direction: column;
  align-items: flex-start;
  margin: 9px 0 3px 12px;
  font-family: "Open Sans", sans-serif;
  color: #3a62c0;
}

.search-button {
  align-self: flex-end;
  width: 44px;
  height: 12px;
  margin: 1px 10px 0 0;
  border: 1px solid #3b5578;
  border-radius: 2px;
  background: #f4f3ec;
}
```
